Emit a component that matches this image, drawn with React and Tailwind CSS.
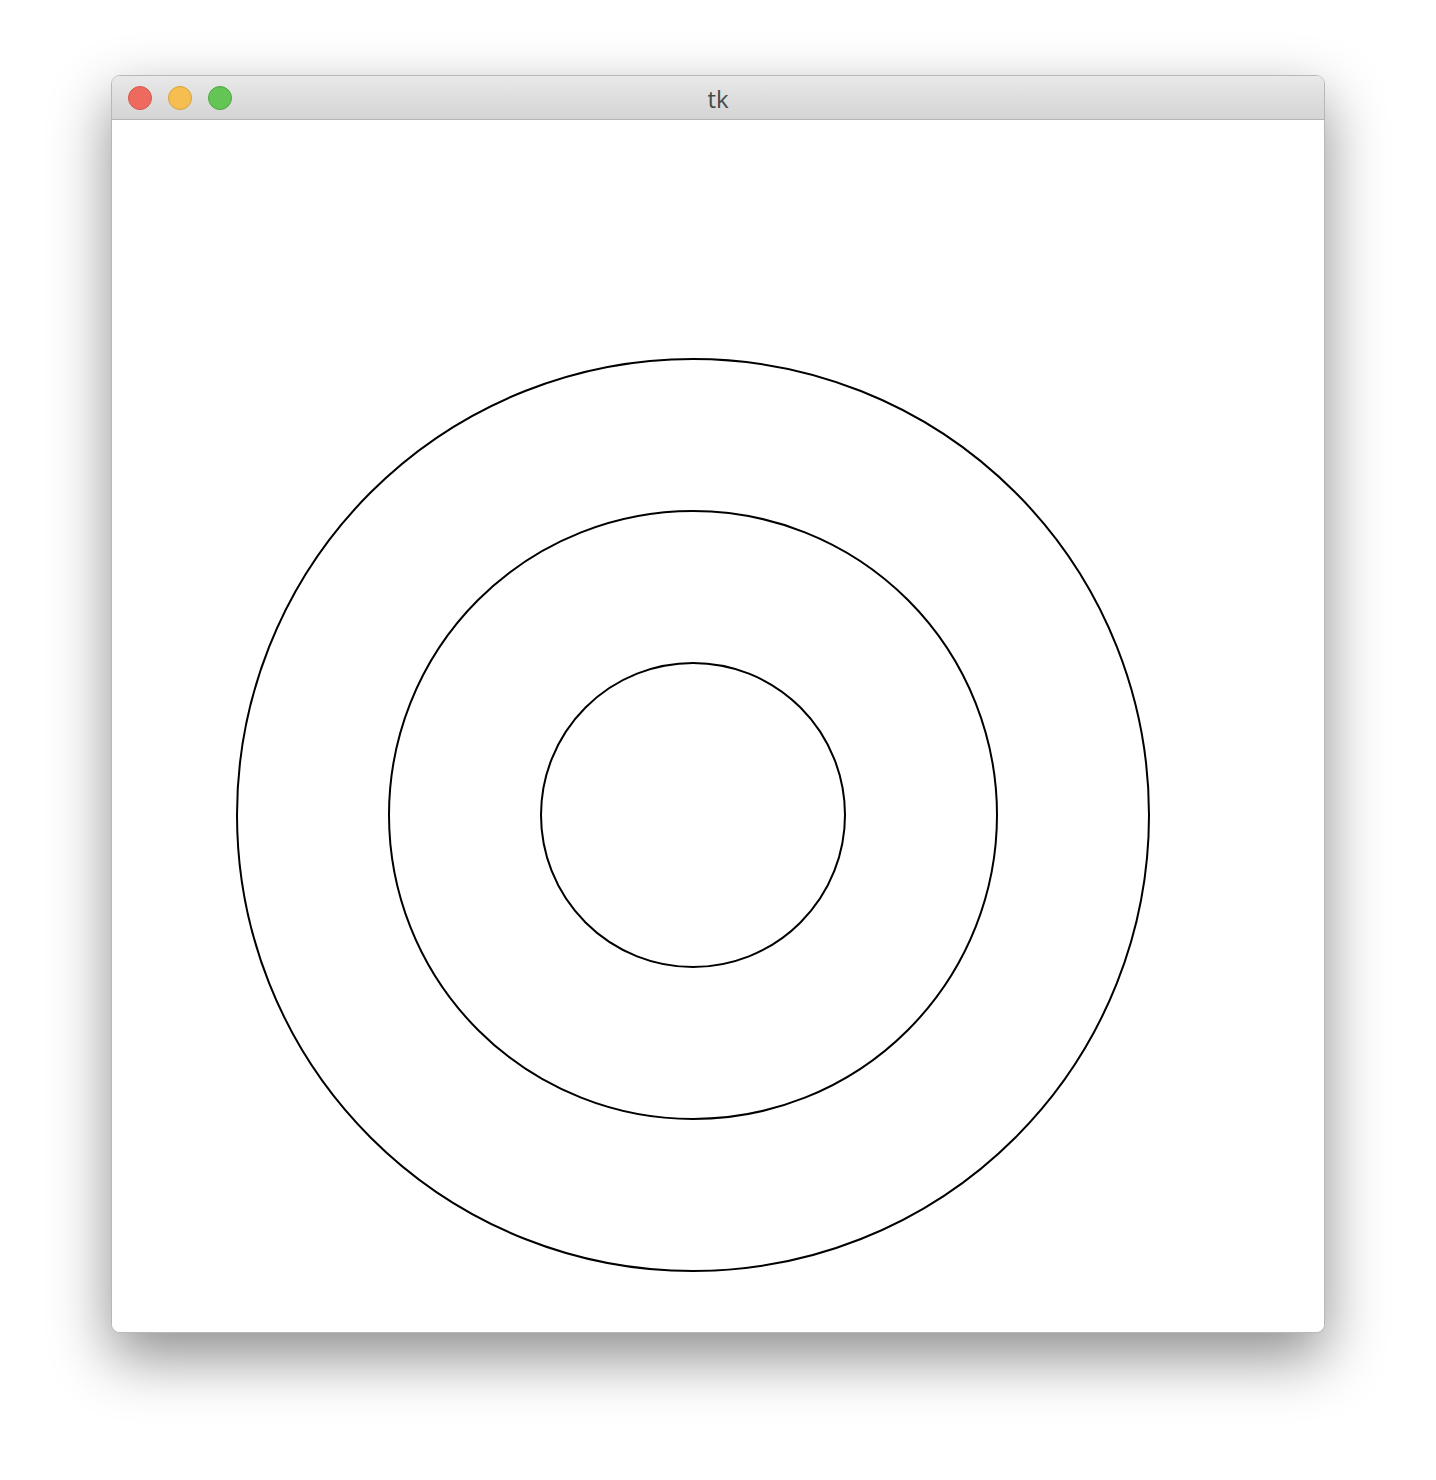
import React from "react";

const rings = [456, 304, 152];

const Light = ({ fill, edge }) => (
  <span
    className={`block w-[24px] h-[24px] rounded-full border ${fill} ${edge}`}
  />
);

export default function App() {
  return (
    <div className="min-h-[1480px] bg-white pt-[75px] pl-[111px]">
      <div className="w-[1214px] rounded-[9px] border border-[#b8b8b8] bg-white overflow-hidden shadow-[0_24px_60px_rgba(0,0,0,0.45)]">
        {/* title bar */}
        <div className="relative h-[44px] flex items-center pl-[16px] gap-[16px] bg-gradient-to-b from-[#e9e9e9] to-[#d4d4d4] border-b border-[#b5b5b5]">
          <Light fill="bg-[#ee6a5f]" edge="border-[#d5574c]" />
          <Light fill="bg-[#f6be50]" edge="border-[#d8a23d]" />
          <Light fill="bg-[#62c554]" edge="border-[#4ea73f]" />
          <span className="absolute left-0 right-0 top-[9px] text-center text-[24px] leading-[28px] text-[#4a4a4a] pointer-events-none font-['Open_Sans','Liberation_Sans',sans-serif]">
            tk
          </span>
        </div>

        {/* canvas */}
        <div className="h-[1212px] bg-white">
          <svg width="1212" height="1212" className="block">
            {rings.map((r) => (
              <circle
                key={r}
                cx="581"
                cy="695"
                r={r}
                fill="none"
                stroke="#000"
                strokeWidth="2"
              />
            ))}
          </svg>
        </div>
      </div>
    </div>
  );
}
